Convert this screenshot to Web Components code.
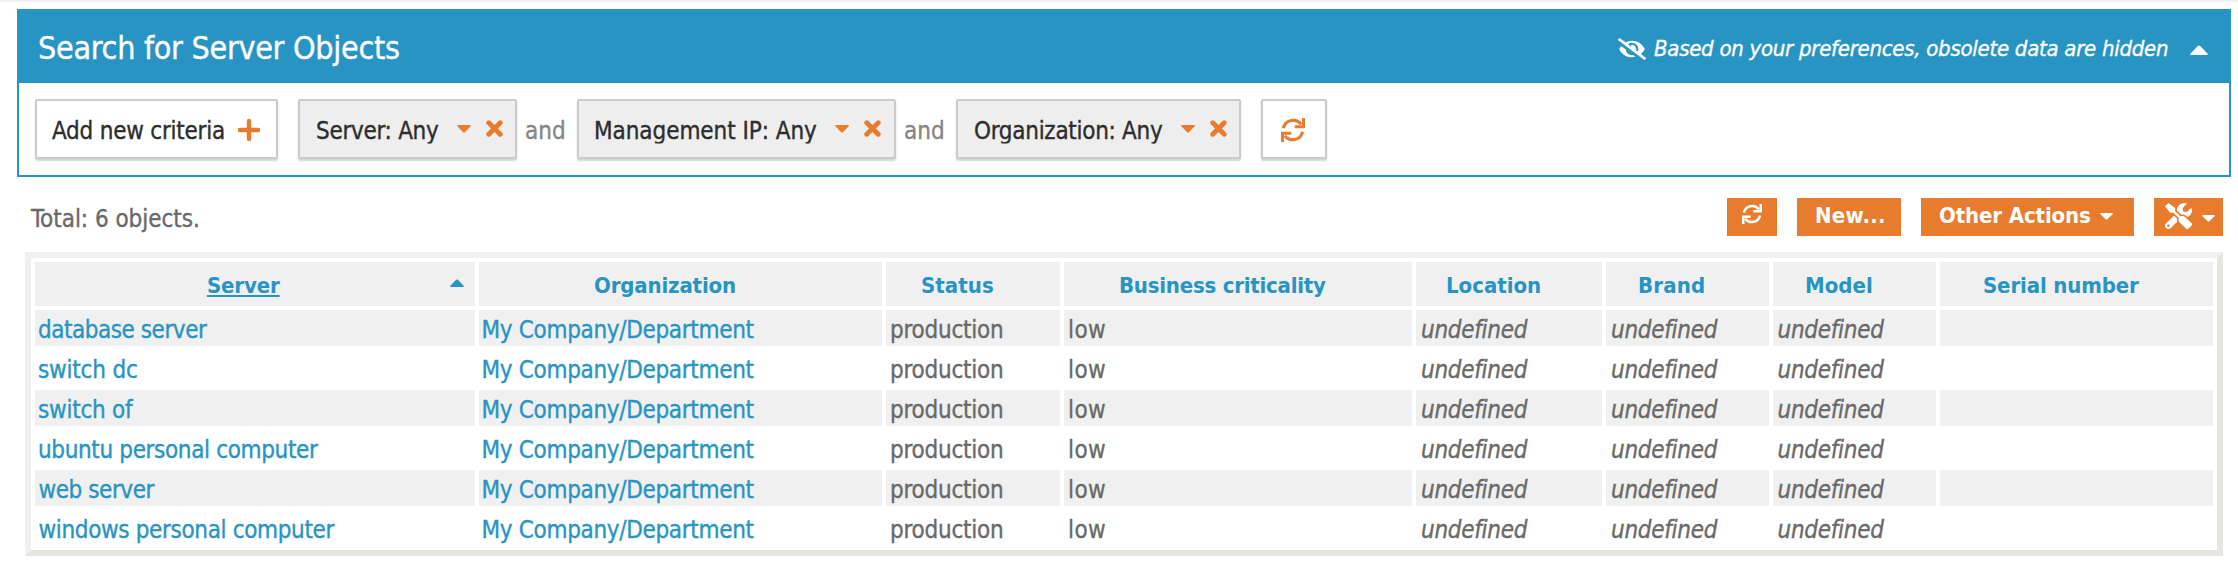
<!DOCTYPE html>
<html lang="en">
<head>
<meta charset="utf-8">
<title>Search for Server Objects</title>
<style>
html,body{margin:0;padding:0;background:#fff}
body{font-family:"DejaVu Sans Condensed","DejaVu Sans",Tahoma,sans-serif;font-size:24px;color:#696969}
</style>
</head>
<body>
<object-search-page></object-search-page>
<script>
const FONT = '"DejaVu Sans Condensed","DejaVu Sans",Tahoma,sans-serif';
const pen = document.createElement('canvas').getContext('2d');

function define(name, html, setup) {
  const tpl = document.createElement('template');
  tpl.innerHTML = html;
  customElements.define(name, class extends HTMLElement {
    connectedCallback() {
      if (this.shadowRoot) return;
      const root = this.attachShadow({ mode: 'open' });
      root.append(tpl.content.cloneNode(true));
      if (setup) setup(this, root);
    }
  });
}

/* Text label tracked to occupy exactly `w` pixels. */
define('tracked-label', `<style>
:host{display:block;flex:none;white-space:nowrap;height:30px;line-height:30px}
span{display:block;white-space:pre}
</style><span></span>`, (el, root) => {
  const text = el.getAttribute('text'), w = +el.getAttribute('w');
  const size = el.getAttribute('size') || 24;
  const style = el.hasAttribute('italic') ? 'italic' : 'normal';
  const weight = el.hasAttribute('bold') ? 700 : 400;
  pen.font = `${style} ${weight} ${size}px ${FONT}`;
  const m = pen.measureText(text);
  const ink = m.actualBoundingBoxLeft + m.actualBoundingBoxRight;
  const span = root.querySelector('span');
  span.textContent = text;
  el.style.width = w + 'px';
  span.style.cssText = `font:${style} ${weight} ${size}px/30px ${FONT};margin-left:${m.actualBoundingBoxLeft}px;letter-spacing:${(w - ink) / (text.length - 1)}px;-webkit-text-stroke:${weight === 400 ? .35 : 0}px currentColor`;
  if (el.hasAttribute('underline')) span.style.cssText += ';text-decoration:underline;text-decoration-thickness:1.5px;text-underline-offset:2px;width:' + w + 'px';
});

const ICONS = {
  caret: ['0 0 14 8', '<path d="M1 0H13Q14.4 .3 13.4 1.4L7.9 7.2Q7 8 6.1 7.2L.6 1.4Q-.4 .3 1 0Z"/>'],
  up: ['0 0 14 8', '<path d="M1 8H13Q14.4 7.7 13.4 6.6L7.9 .8Q7 0 6.1 .8L.6 6.6Q-.4 7.7 1 8Z"/>'],
  plus: ['0 0 22 22', '<path d="M11 2V20M2 11H20" fill="none" stroke="currentColor" stroke-width="4.4" stroke-linecap="round"/>'],
  cross: ['0 0 16 16', '<path d="M2.6 2.6L13.4 13.4M13.4 2.6L2.6 13.4" fill="none" stroke="currentColor" stroke-width="4.6" stroke-linecap="round"/>'],
  refresh: ['0 0 24 24', '<path d="M2.4 10.3A10 10 0 0 1 20.2 6.4M21.6 13.7A10 10 0 0 1 3.8 17.6" fill="none" stroke="currentColor" stroke-width="3.1"/><path d="M21 0H24V10.3H13.7V7.2H21ZM3 24H0V13.7H10.3V16.8H3Z"/>'],
  eyeoff: ['0 0 640 512', '<path d="M320 400c-75.85 0-137.25-58.71-142.9-133.11L72.2 185.82c-13.79 17.3-26.48 35.59-36.72 55.59a32.35 32.35 0 0 0 0 29.19C89.71 376.41 197.07 448 320 448c26.91 0 52.87-4 77.89-10.46L346 397.39a144.13 144.13 0 0 1-26 2.61zm313.82 58.1l-110.55-85.44a331.25 331.25 0 0 0 81.25-102.07 32.35 32.35 0 0 0 0-29.19C550.29 135.59 442.93 64 320 64a308.15 308.15 0 0 0-147.32 37.7L45.46 3.37A16 16 0 0 0 23 6.18L3.37 31.45A16 16 0 0 0 6.18 53.9l588.36 454.73a16 16 0 0 0 22.46-2.81l19.64-25.27a16 16 0 0 0-2.82-22.45zm-183.72-142l-39.3-30.38A94.75 94.75 0 0 0 416 256a94.76 94.76 0 0 0-121.31-92.21A47.65 47.65 0 0 1 304 192a46.64 46.64 0 0 1-1.54 10l-73.61-56.89A142.31 142.31 0 0 1 320 112a143.92 143.92 0 0 1 144 144c0 21.63-5.29 41.79-13.9 60.11z"/>'],
  tools: ['0 0 512 512', '<path d="M501.1 395.7L384 278.6c-23.1-23.1-57.6-27.6-85.4-13.9L192 158.1V96L64 0 0 64l96 128h62.1l106.6 106.6c-13.6 27.8-9.2 62.3 13.9 85.4l117.1 117.1c14.6 14.6 38.2 14.6 52.7 0l52.7-52.7c14.5-14.6 14.5-38.2 0-52.7zM331.7 225c28.3 0 54.9 11 74.9 31l19.4 19.4c15.8-6.9 30.8-16.5 43.8-29.5 37.1-37.1 49.7-89.3 37.9-136.7-2.2-9-13.5-12.1-20.1-5.5l-74.4 74.4-67.9-11.3L334 98.9l74.4-74.4c6.6-6.6 3.4-17.9-5.7-20.2-47.4-11.7-99.6.9-136.6 37.9-28.5 28.5-41.9 66.1-41.2 103.6l82.1 82.1c8.1-1.9 16.5-2.9 24.7-2.9zm-103.9 82l-56.7-56.7L18.7 402.8c-25 25-25 65.5 0 90.5s65.5 25 90.5 0l123.6-123.6c-7.6-19.9-9.9-41.6-5-62.7zM64 472c-13.2 0-24-10.8-24-24 0-13.3 10.7-24 24-24s24 10.7 24 24c0 13.2-10.7 24-24 24z"/>']
};
define('ui-icon', `<style>:host{display:block;flex:none}svg{display:block;width:100%;height:100%;fill:currentColor}</style><svg preserveAspectRatio="none"></svg>`, (el, root) => {
  const [box, body] = ICONS[el.getAttribute('name')];
  const svg = root.querySelector('svg');
  svg.setAttribute('viewBox', box);
  svg.innerHTML = body;
  el.style.width = el.getAttribute('w') + 'px';
  el.style.height = el.getAttribute('h') + 'px';
});

define('criteria-box', `<style>
:host{display:flex;flex:none;box-sizing:border-box;height:60px;border:2px solid #cbcbcb;border-radius:2px;background:#fff;color:#2d2d2d;box-shadow:0 2px 2px rgba(0,0,0,.17)}
:host([filled]){background:#eee}
</style><slot></slot>`);

define('criterion-chip', `<style>
:host{display:block;flex:none}
criteria-box{width:var(--box)}
tracked-label{margin:15px 0 0 17px;clip-path:inset(0 -6px 2.5px -6px)}
.c{color:#e87c2e;margin:24px 0 0 18px}.x{color:#e87c2e;margin:19px 0 0 15px}
</style><criteria-box filled><ui-icon class="c" name="caret" w="14" h="8"></ui-icon><ui-icon class="x" name="cross" w="17" h="17"></ui-icon></criteria-box>`, (el, root) => {
  const label = document.createElement('tracked-label');
  label.setAttribute('text', el.getAttribute('label'));
  label.setAttribute('w', el.getAttribute('w'));
  root.querySelector('criteria-box').prepend(label);
  el.style.setProperty('--box', el.getAttribute('box') + 'px');
});

define('search-panel', `<style>
:host{display:block;box-sizing:border-box;width:2214px;height:168px;border:2px solid #2894c3}
header{display:flex;height:72px;background:#2894c3;color:#fff}
.title{margin:22px 0 0 20px}
.eye{margin:27px 0 0 auto}.note{margin:23px 0 0 8px}.fold{margin:34px 21px 0 22px}
.criteria{display:flex;padding:16px 0 0 16px}
.and{color:#868686;margin-top:17px}
</style>
<header>
<tracked-label class="title" text="Search for Server Objects" w="360" size="32"></tracked-label>
<ui-icon class="eye" name="eyeoff" w="28" h="22"></ui-icon>
<tracked-label class="note" italic text="Based on your preferences, obsolete data are hidden" w="514" size="22"></tracked-label>
<ui-icon class="fold" name="up" w="18" h="10"></ui-icon>
</header>
<div class="criteria">
<criteria-box style="width:243px"><tracked-label style="margin:15px 0 0 15px" text="Add new criteria" w="172"></tracked-label><ui-icon name="plus" w="22" h="22" style="color:#e87c2e;margin:18px 0 0 14px"></ui-icon></criteria-box>
<criterion-chip style="margin-left:20px" label="Server: Any" w="122" box="219"></criterion-chip>
<tracked-label class="and" style="margin-left:9px" text="and" w="38"></tracked-label>
<criterion-chip style="margin-left:13px" label="Management IP: Any" w="221" box="319"></criterion-chip>
<tracked-label class="and" style="margin-left:9px" text="and" w="38"></tracked-label>
<criterion-chip style="margin-left:13px" label="Organization: Any" w="188" box="285"></criterion-chip>
<criteria-box style="width:66px;margin-left:20px"><ui-icon name="refresh" w="24" h="24" style="color:#e87c2e;margin:17px 0 0 18px"></ui-icon></criteria-box>
</div>`);

define('action-button', `<style>:host{display:flex;flex:none;height:38px;background:#e87c2e;color:#fff}</style><slot></slot>`);

define('result-toolbar', `<style>
:host{display:flex;gap:20px;width:2193px;height:54px;margin:21px 0 0 30px}
.total{margin:6px auto 0 0}
</style>
<tracked-label class="total" text="Total: 6 objects." w="168"></tracked-label>
<action-button style="width:50px"><ui-icon name="refresh" w="20" h="20" style="margin:6px 0 0 15px"></ui-icon></action-button>
<action-button style="width:104px"><tracked-label bold size="22" text="New..." w="68" style="margin:3px 0 0 19px"></tracked-label></action-button>
<action-button style="width:213px"><tracked-label bold size="22" text="Other Actions" w="151" style="margin:3px 0 0 18px"></tracked-label><ui-icon name="caret" w="13" h="7" style="margin:15px 0 0 10px"></ui-icon></action-button>
<action-button style="width:69px"><ui-icon name="tools" w="27" h="26" style="margin:5px 0 0 11px"></ui-icon><ui-icon name="caret" w="13" h="7" style="margin:17px 0 0 10px"></ui-icon></action-button>`);

const COLUMNS = [
  ['Server', 173, 72], ['Organization', 115, 141], ['Status', 36, 71], ['Business criticality', 56, 206],
  ['Location', 31, 93], ['Brand', 33, 65], ['Model', 33, 66], ['Serial number', 44, 155]
];
const SERVERS = [['database server', 168], ['switch dc', 98], ['switch of', 95], ['ubuntu personal computer', 279], ['web server', 116], ['windows personal computer', 296]];

define('server-table', `<style>
:host{display:block;box-sizing:border-box;width:2198px;margin-left:25px;border:6px solid;border-color:#f0f0f0 #e6e6e0 #e6e6e0 #f0f0f0}
.grid{display:grid;padding:4px;gap:4px;grid-template-columns:440px 403px 174px 348px 186px 163px 163px 273px;grid-template-rows:44px;grid-auto-rows:36px}
.head{display:flex;background:#f0f0f0;color:#2894c3}
.cell{display:flex}
.odd{background:#f0f0f0}
.link{color:#2894c3}
.head tracked-label{margin-top:9px}
.cell tracked-label{margin-top:5px}
</style><div class="grid"></div>`, (el, root) => {
  const label = (text, w, left, extra = '') => `<tracked-label text="${text}" w="${w}" ${extra} style="margin-left:${left}px"></tracked-label>`;
  let html = COLUMNS.map(([t, left, w], i) => `<div class="head">${label(t, w, left, 'bold size="22"' + (i ? '' : ' underline'))}${i ? '' : '<ui-icon name="up" w="14" h="8" style="margin:17px 11px 0 auto"></ui-icon>'}</div>`).join('');
  SERVERS.forEach(([name, w], r) => {
    const cells = [[name, w, r > 3 ? 3.5 : 4], ['My Company/Department', 270, 4.5], ['production', 111, 5], ['low', 35, 6], ['undefined', 106, 6], ['undefined', 106, 6], ['undefined', 106, 5.5], null];
    html += cells.map((c, i) => `<div class="cell ${r % 2 ? '' : 'odd'} ${i < 2 ? 'link' : ''}">${c ? label(...c, i > 3 ? 'italic' : '') : ''}</div>`).join('');
  });
  root.querySelector('.grid').innerHTML = html;
});

define('object-search-page', `<style>
:host{display:block;box-sizing:border-box;width:2238px;height:578px;border-top:2px solid #f0f0f0;overflow:hidden}
search-panel{margin:7px 0 0 17px}
</style><search-panel></search-panel><result-toolbar></result-toolbar><server-table></server-table>`);
</script>
</body>
</html>
